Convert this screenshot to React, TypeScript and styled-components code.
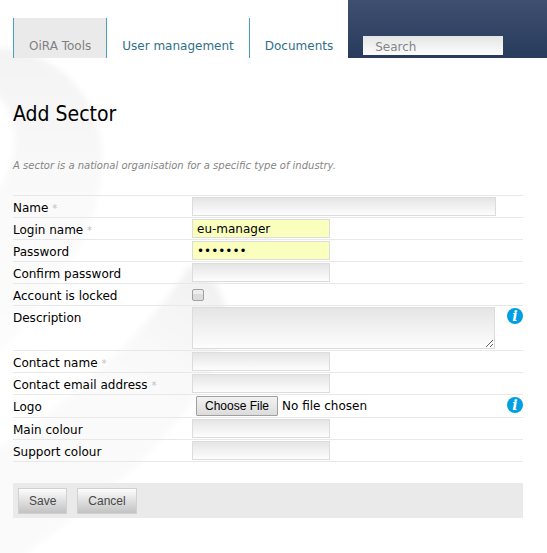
import React from 'react';
import styled, { createGlobalStyle, css } from 'styled-components';

const GlobalStyle = createGlobalStyle`
  *, *::before, *::after { box-sizing: border-box; }
  body {
    margin: 0;
    background: #fff;
    color: #000;
    font: 12px/16px "DejaVu Sans", sans-serif;
  }
`;

const Page = styled.div`
  position: relative;
  min-height: 100vh;
  overflow: hidden;
`;

const Swirl = styled.svg`
  position: absolute;
  top: 0;
  left: 0;
  z-index: -1;
`;

const Header = styled.header`
  display: flex;
  align-items: flex-end;
`;

const Tabs = styled.nav`
  display: flex;
  flex: none;
  margin-left: 13px;
`;

const Tab = styled.a<{ $active?: boolean }>`
  height: 40px;
  padding: 20px 15px 0;
  border-left: 1px solid #4a9fc0;
  color: #2f7088;
  text-decoration: none;
  white-space: nowrap;
  ${({ $active }) => $active && css`
    background: #eaeaea;
    color: #808080;
  `}
`;

const SearchPanel = styled.form`
  display: flex;
  flex: 1;
  align-items: flex-end;
  min-width: 170px;
  height: 58px;
  padding: 0 15px 3px;
  background: linear-gradient(#3f4f70, #283b5c);
`;

const fieldFill = 'linear-gradient(#e5e5e5, #fdfdfd)';

const SearchInput = styled.input`
  width: 140px;
  height: 19px;
  padding: 2px 12px 0;
  border: 0;
  background: ${fieldFill};
  font: inherit;
  &::placeholder { color: #858585; opacity: 1; }
`;

const Main = styled.main`
  padding: 40px 24px 35px 13px;
`;

const Title = styled.h1`
  margin: 0 0 28px;
  font: 400 21px/32px "DejaVu Sans Condensed", "DejaVu Sans", sans-serif;
`;

const Intro = styled.p`
  margin: 0 0 21px;
  color: #858585;
  font-size: 10px;
  font-style: italic;
  line-height: 16px;
`;

const Rows = styled.div`
  border-top: 1px solid #e8e8e8;
`;

const Row = styled.div`
  display: grid;
  grid-template-columns: 179px 1fr auto;
  align-items: start;
  min-height: 22px;
  padding: 1px 0;
  border-bottom: 1px solid #e8e8e8;
`;

const Label = styled.label`
  padding-top: 3px;
`;

const Required = styled.span`
  color: #c0c0c0;
  font-size: 10px;
  line-height: 12px;
`;

const fieldBox = css`
  display: block;
  border: 1px solid #dcdcdc;
  border-radius: 0;
  background: ${fieldFill};
  color: #000;
  font: inherit;
  outline: 0;
`;

const Field = styled.input<{ $wide?: boolean; $filled?: boolean }>`
  ${fieldBox}
  width: ${({ $wide }) => ($wide ? '304px' : '138px')};
  max-width: 100%;
  height: 19px;
  padding: 0 4px;
  ${({ $filled }) => $filled && css`background: #faffbd;`}
`;

const TextArea = styled.textarea`
  ${fieldBox}
  width: 303px;
  max-width: 100%;
  height: 42px;
  padding: 2px 4px;
  resize: both;
`;

const Checkbox = styled.input`
  appearance: none;
  width: 12px;
  height: 12px;
  margin: 4px 0 0;
  border: 1px solid #a0a0a0;
  border-radius: 2px;
  background: linear-gradient(#ededed 40%, #dcdcdc 40%);
  &:checked { background: #666; }
`;

const FileField = styled.input`
  display: block;
  height: 20px;
  padding: 0 4px;
  font: inherit;
  line-height: 20px;
  &::file-selector-button {
    height: 20px;
    margin: 0 4px 0 0;
    padding: 0 8px;
    border: 1px solid #a0a0a0;
    border-radius: 1px;
    background: linear-gradient(#f2f2f2, #dcdcdc);
    color: #000;
    font: 12px "Liberation Sans", sans-serif;
  }
`;

const Info = styled.button`
  width: 16px;
  height: 16px;
  margin-top: 1px;
  padding: 0;
  border: 0;
  border-radius: 50%;
  background: #009fe3;
  color: #fff;
  font: italic 700 14px/16px "DejaVu Serif", serif;
  text-align: center;
`;

const Actions = styled.div`
  display: flex;
  gap: 10px;
  margin-top: 21px;
  padding: 5px 5px 4px;
  background: #eaeaea;
`;

const Action = styled.button`
  height: 26px;
  padding: 0 10px;
  border: 1px solid #d0d0d0;
  background: linear-gradient(#fdfdfd, #c2c2c2);
  color: #484848;
  font: 12px "Liberation Sans", sans-serif;
`;

type RowProps = {
  id: string;
  label: string;
  required?: boolean;
  info?: boolean;
  children: React.ReactNode;
};

function FormRow({ id, label, required, info, children }: RowProps) {
  return (
    <Row>
      <Label htmlFor={id}>
        {label} {required && <Required>*</Required>}
      </Label>
      {children}
      {info && <Info type="button" aria-label={`About ${label}`}>i</Info>}
    </Row>
  );
}

function Background() {
  return (
    <Swirl width="547" height="553" viewBox="0 0 547 553" aria-hidden="true">
      <defs>
        <linearGradient id="ring" x1="0" y1="0" x2="0" y2="1">
          <stop offset="0" stopColor="#f3f3f3" />
          <stop offset=".4" stopColor="#f9f9f9" />
          <stop offset="1" stopColor="#fdfdfd" />
        </linearGradient>
        <linearGradient id="stroke" gradientUnits="userSpaceOnUse" x1="200" y1="275" x2="100" y2="420">
          <stop offset="0" stopColor="#f1f1f1" />
          <stop offset=".5" stopColor="#f9f9f9" />
          <stop offset="1" stopColor="#fafafa" />
        </linearGradient>
        <filter id="soft" x="-20%" y="-20%" width="140%" height="140%">
          <feGaussianBlur stdDeviation="3" />
        </filter>
      </defs>
      <g filter="url(#soft)">
        <path
          fill="url(#ring)"
          d="M-20 48C48 42 101 92 102 153C103 205 82 250 53 288C34 314 8 347-20 374V210C2 192 15 166 15 136C14 112 2 94-20 82Z"
        />
        <path
          fill="url(#stroke)"
          d="M-20 460C40 425 90 380 130 340C155 313 175 290 188 268C203 264 220 282 226 310C229 365 181 421 134 468C94 503 47 536-20 590Z"
        />
      </g>
    </Swirl>
  );
}

export default function App() {
  return (
    <>
      <GlobalStyle />
      <Page>
        <Background />
        <Header>
          <Tabs>
            <Tab href="#tools" $active>OiRA Tools</Tab>
            <Tab href="#users">User management</Tab>
            <Tab href="#documents">Documents</Tab>
          </Tabs>
          <SearchPanel role="search">
            <SearchInput type="text" placeholder="Search" aria-label="Search" />
          </SearchPanel>
        </Header>
        <Main>
          <Title>Add Sector</Title>
          <Intro>A sector is a national organisation for a specific type of industry.</Intro>
          <form onSubmit={(e) => e.preventDefault()}>
            <Rows>
              <FormRow id="name" label="Name" required>
                <Field id="name" type="text" $wide />
              </FormRow>
              <FormRow id="login" label="Login name" required>
                <Field id="login" type="text" defaultValue="eu-manager" $filled />
              </FormRow>
              <FormRow id="password" label="Password">
                <Field id="password" type="password" defaultValue="manager" $filled />
              </FormRow>
              <FormRow id="confirm" label="Confirm password">
                <Field id="confirm" type="password" />
              </FormRow>
              <FormRow id="locked" label="Account is locked">
                <Checkbox id="locked" type="checkbox" />
              </FormRow>
              <FormRow id="description" label="Description" info>
                <TextArea id="description" />
              </FormRow>
              <FormRow id="contact" label="Contact name" required>
                <Field id="contact" type="text" />
              </FormRow>
              <FormRow id="email" label="Contact email address" required>
                <Field id="email" type="email" />
              </FormRow>
              <FormRow id="logo" label="Logo" info>
                <FileField id="logo" type="file" />
              </FormRow>
              <FormRow id="main-colour" label="Main colour">
                <Field id="main-colour" type="text" />
              </FormRow>
              <FormRow id="support-colour" label="Support colour">
                <Field id="support-colour" type="text" />
              </FormRow>
            </Rows>
            <Actions>
              <Action type="submit">Save</Action>
              <Action type="button">Cancel</Action>
            </Actions>
          </form>
        </Main>
      </Page>
    </>
  );
}
